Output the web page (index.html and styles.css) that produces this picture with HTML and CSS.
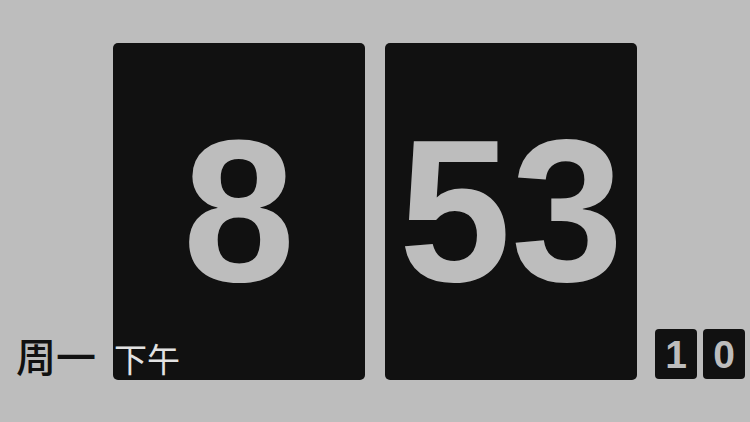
FILE: index.html
```html
<!DOCTYPE html>
<html lang="zh">
<head>
<meta charset="utf-8">
<link rel="stylesheet" href="styles.css">
</head>
<body>
<main class="clock">
  <div class="card"><span class="num">8</span></div>
  <div class="card"><span class="num">53</span></div>
</main>
<div class="info">
  <span class="day">周一</span>
  <span class="ampm">下午</span>
</div>
<div class="seconds">
  <span class="sec">1</span>
  <span class="sec">0</span>
</div>
</body>
</html>
```
FILE: styles.css
```css
html, body {
  margin: 0;
  padding: 0;
  width: 750px;
  height: 422px;
  overflow: hidden;
}
body {
  background: #bdbdbd;
  font-family: "Liberation Sans", "Noto Sans CJK SC", sans-serif;
  position: relative;
}
.clock {
  display: flex;
  justify-content: center;
  align-items: center;
  gap: 20px;
  height: 422px;
}
.card {
  width: 252px;
  height: 337px;
  background: #111111;
  border-radius: 5px;
  display: flex;
  align-items: center;
  justify-content: center;
}
.num {
  color: #bdbdbd;
  font-size: 202px;
  font-weight: bold;
  line-height: 1;
  letter-spacing: 0;
}
.info {
  position: absolute;
  left: 16px;
  bottom: 47px;
  display: flex;
  align-items: baseline;
  gap: 18px;
  font-family: "Noto Sans CJK SC", sans-serif;
  line-height: 1;
}
.day {
  color: #111111;
  font-size: 40px;
  font-weight: 500;
}
.ampm {
  color: #e2e2e2;
  font-size: 33px;
  font-weight: 400;
}
.seconds {
  position: absolute;
  right: 5px;
  bottom: 43px;
  display: flex;
  gap: 6px;
}
.sec {
  width: 42px;
  height: 50px;
  background: #111111;
  border-radius: 4px;
  color: #bdbdbd;
  font-size: 39px;
  font-weight: bold;
  display: flex;
  align-items: center;
  justify-content: center;
  line-height: 1;
}
```
